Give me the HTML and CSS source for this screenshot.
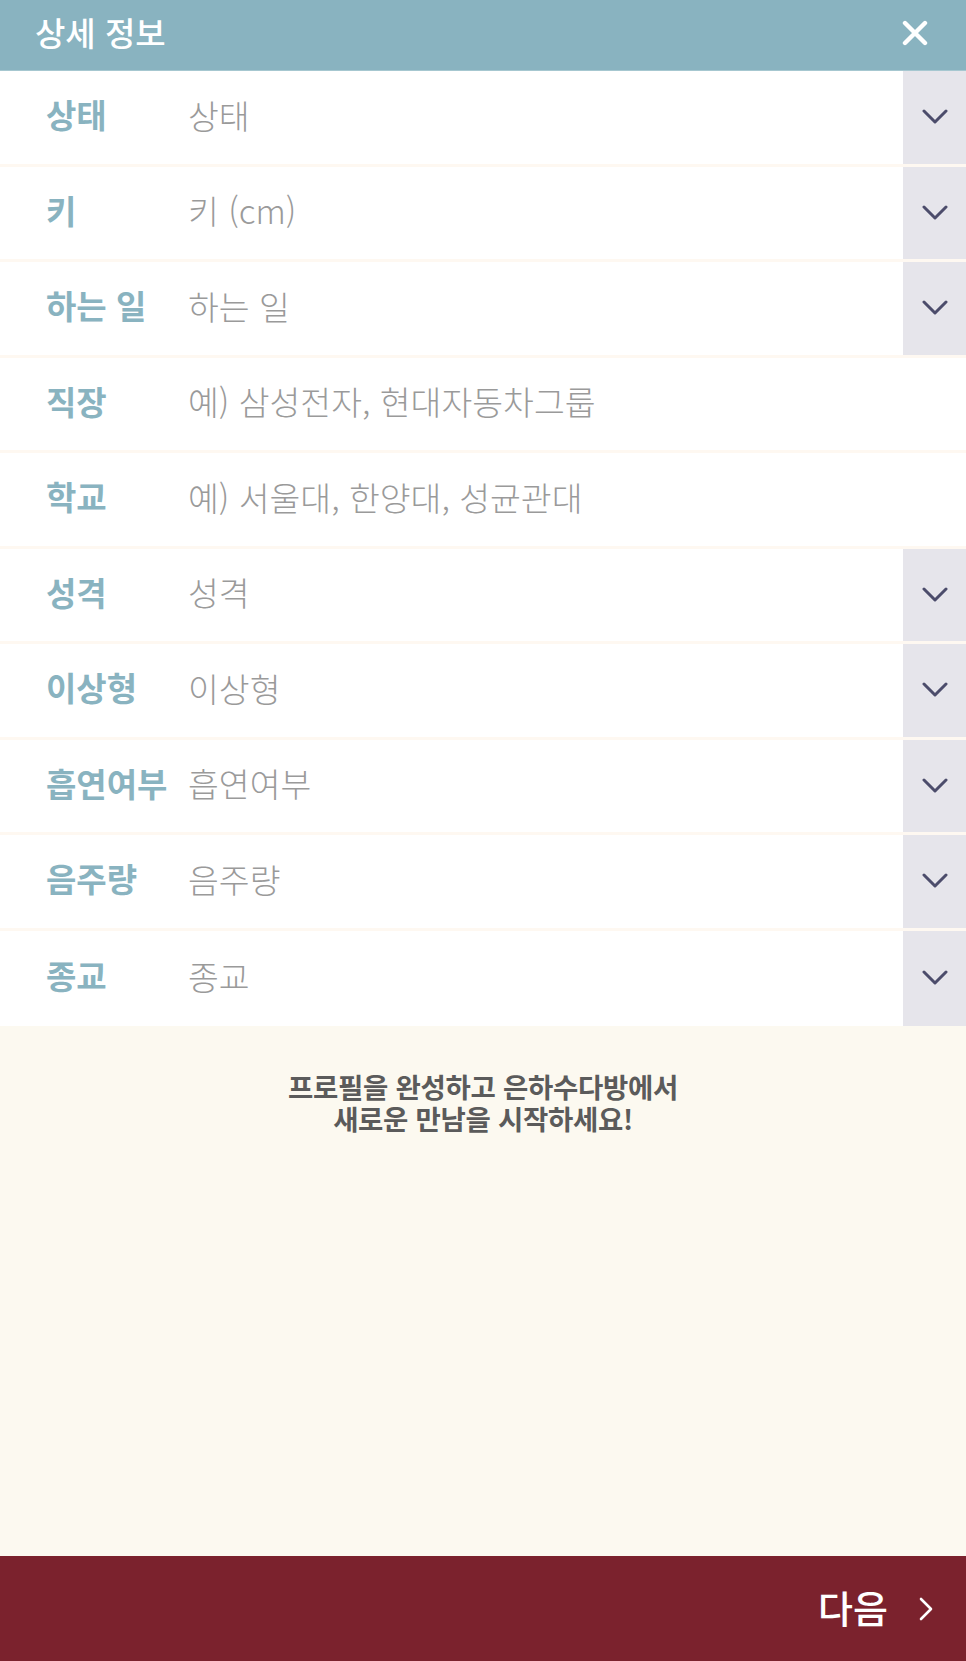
FILE: index.html
```html
<!DOCTYPE html>
<html lang="ko">
<head>
<meta charset="utf-8">
<title>상세 정보</title>
<link rel="stylesheet" href="styles.css">
</head>
<body>
<div class="page">
  <header class="topbar">
    <h1 class="title">상세 정보</h1>
    <svg class="close" viewBox="0 0 26 26" aria-label="닫기"><path d="M3 3 L23 23 M23 3 L3 23" /></svg>
  </header>

  <main class="form">
    <div class="row">
      <span class="label">상태</span><span class="value">상태</span>
      <span class="drop"><svg viewBox="0 0 26 16"><path d="M2 2 L13 13 L24 2"/></svg></span>
    </div>
    <div class="row">
      <span class="label">키</span><span class="value">키 (cm)</span>
      <span class="drop"><svg viewBox="0 0 26 16"><path d="M2 2 L13 13 L24 2"/></svg></span>
    </div>
    <div class="row">
      <span class="label">하는 일</span><span class="value">하는 일</span>
      <span class="drop"><svg viewBox="0 0 26 16"><path d="M2 2 L13 13 L24 2"/></svg></span>
    </div>
    <div class="row">
      <span class="label">직장</span><span class="value">예) 삼성전자, 현대자동차그룹</span>
    </div>
    <div class="row">
      <span class="label">학교</span><span class="value">예) 서울대, 한양대, 성균관대</span>
    </div>
    <div class="row">
      <span class="label">성격</span><span class="value">성격</span>
      <span class="drop"><svg viewBox="0 0 26 16"><path d="M2 2 L13 13 L24 2"/></svg></span>
    </div>
    <div class="row">
      <span class="label">이상형</span><span class="value">이상형</span>
      <span class="drop"><svg viewBox="0 0 26 16"><path d="M2 2 L13 13 L24 2"/></svg></span>
    </div>
    <div class="row">
      <span class="label">흡연여부</span><span class="value">흡연여부</span>
      <span class="drop"><svg viewBox="0 0 26 16"><path d="M2 2 L13 13 L24 2"/></svg></span>
    </div>
    <div class="row">
      <span class="label">음주량</span><span class="value">음주량</span>
      <span class="drop"><svg viewBox="0 0 26 16"><path d="M2 2 L13 13 L24 2"/></svg></span>
    </div>
    <div class="row last">
      <span class="label">종교</span><span class="value">종교</span>
      <span class="drop"><svg viewBox="0 0 26 16"><path d="M2 2 L13 13 L24 2"/></svg></span>
    </div>
  </main>

  <section class="notice">
    <p>프로필을 완성하고 은하수다방에서<br>새로운 만남을 시작하세요!</p>
  </section>

  <footer class="nextbar">
    <span class="next">다음</span>
    <svg class="next-arrow" viewBox="0 0 16 26"><path d="M3 3 L13 13 L3 23"/></svg>
  </footer>
</div>
</body>
</html>
```

FILE: styles.css
```css
* { box-sizing: border-box; }
html, body {
  margin: 0;
  padding: 0;
  height: 100%;
}
body {
  font-family: "Noto Sans CJK KR", "Noto Sans", sans-serif;
  background: #fcf9f0;
}
.page {
  display: flex;
  flex-direction: column;
  height: 1661px;
  width: 966px;
}
.topbar {
  height: 71px;
  flex: 0 0 71px;
  background: #89b3c0;
  display: flex;
  align-items: center;
  justify-content: space-between;
  padding: 0 38px 0 35px;
  border-bottom: 1px solid #a6c7d0;
}
.title {
  margin: 0;
  color: #ffffff;
  font-size: 33px;
  font-weight: 500;
  line-height: 1;
  padding-bottom: 6px;
}
.close {
  width: 26px;
  height: 26px;
  fill: none;
  stroke: #ffffff;
  stroke-width: 4.4;
  stroke-linecap: round;
  margin-bottom: 4px;
}
.form {
  display: flex;
  flex-direction: column;
}
.row {
  height: 95.5px;
  display: flex;
  align-items: stretch;
  background: #ffffff;
  border-bottom: 3px solid #fef8f1;
}
.row.last {
  border-bottom: 0;
}
.label {
  width: 188px;
  padding-left: 46px;
  display: flex;
  align-items: center;
  color: #89b3c0;
  font-size: 33px;
  font-weight: 700;
  padding-bottom: 6px;
}
.value {
  flex: 1;
  display: flex;
  align-items: center;
  color: #9a9a9a;
  font-size: 33.5px;
  font-weight: 300;
  padding-bottom: 6px;
}
.drop {
  width: 63px;
  background: #e6e5eb;
  display: flex;
  align-items: center;
  justify-content: center;
}
.drop svg {
  width: 26px;
  height: 16px;
  fill: none;
  stroke: #4c4c6b;
  stroke-width: 3;
  stroke-linecap: round;
  stroke-linejoin: round;
}
.notice {
  flex: 1;
  padding-top: 44px;
}
.notice p {
  margin: 0;
  text-align: center;
  color: #5b5b5b;
  font-size: 27.5px;
  font-weight: 700;
  line-height: 32px;
  letter-spacing: -0.3px;
}
.nextbar {
  flex: 0 0 105px;
  height: 105px;
  background: #7b222d;
  display: flex;
  align-items: center;
  justify-content: flex-end;
  padding-right: 32px;
  gap: 30px;
}
.next {
  color: #ffffff;
  font-size: 38px;
  font-weight: 500;
  line-height: 1;
  padding-bottom: 4px;
}
.next-arrow {
  width: 16px;
  height: 26px;
  fill: none;
  stroke: #ffffff;
  stroke-width: 2.6;
  stroke-linecap: round;
  stroke-linejoin: round;
}
```
